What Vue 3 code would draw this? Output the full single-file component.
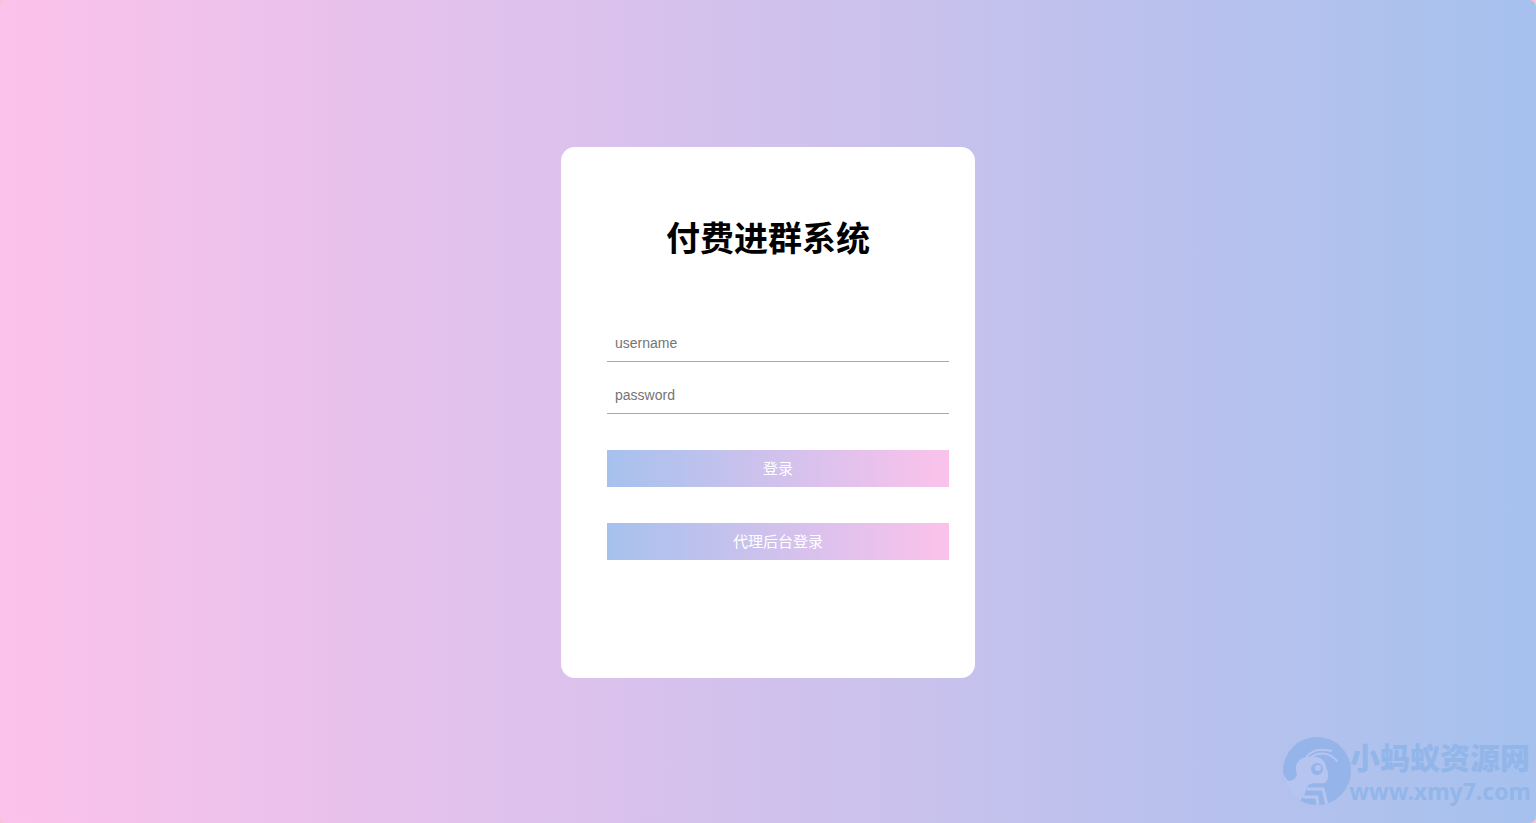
<script setup>
import { ref } from 'vue'

const username = ref('')
const password = ref('')
</script>

<template>
  <main class="page">
    <section class="card">
      <h1 class="title">付费进群系统</h1>
      <form class="form" @submit.prevent>
        <input v-model="username" class="field" type="text" name="username" placeholder="username" aria-label="username" />
        <input v-model="password" class="field" type="password" name="password" placeholder="password" aria-label="password" />
        <button class="btn" type="submit">登录</button>
        <button class="btn" type="button">代理后台登录</button>
      </form>
    </section>

    <aside class="brand">
      <svg class="logo" viewBox="0 0 68 68" aria-hidden="true">
        <defs>
          <clipPath id="disc"><circle cx="34" cy="34" r="34" /></clipPath>
        </defs>
        <circle cx="34" cy="34" r="34" fill="#95b4e9" />
        <g clip-path="url(#disc)">
          <path
            d="M13 33 C12 25 18 19 27 20 C36 18 43 24 43 31 C46 35 46 41 43 45 C39 48 31 45 27 47 C22 50 24 56 19 61 L14 68 L-2 60 L-2 36 L0 37 L5 44 C9 44 13 41 14 38 Z"
            fill="#b5c5f0"
          />
          <g fill="none" stroke="#b5c5f0" stroke-linecap="round">
            <path d="M23 21 C28 13 36 11 48 14" stroke-width="2" />
            <path d="M28 20 C37 14 47 16 54 24" stroke-width="2" />
          </g>
          <g fill="none" stroke="#b5c5f0">
            <path d="M24 52 H40 L44 68" stroke-width="3" />
            <path d="M20 60 H34 L35 70" stroke-width="3" />
          </g>
          <circle cx="34" cy="32" r="6" fill="#95b4e9" />
          <circle cx="35" cy="31" r="3" fill="#b5c5f0" />
        </g>
      </svg>
      <div class="brand-text">
        <span class="brand-name">小蚂蚁资源网</span>
        <span class="brand-url">www.xmy7.com</span>
      </div>
    </aside>
  </main>
</template>

<style>
body {
  margin: 0;
  background: #f6c3d6;
}
</style>

<style scoped>
.page {
  position: relative;
  box-sizing: border-box;
  display: flex;
  align-items: center;
  justify-content: center;
  min-height: 100vh;
  padding-top: 2px;
  border-radius: 7px;
  background: linear-gradient(to right, #fbc2eb, #a6c1ee);
  font-family: "Liberation Sans", "Noto Sans CJK SC", sans-serif;
}

.card {
  box-sizing: border-box;
  width: 414px;
  max-width: 100%;
  padding: 67px 0 118px;
  border-radius: 14px;
  background: #fff;
}

.title {
  margin: 0 0 61px;
  font-size: 34px;
  line-height: 50px;
  font-weight: 700;
  text-align: center;
  color: #000;
}

.form {
  display: flex;
  flex-direction: column;
  padding: 0 26px 0 46px;
}

.field {
  box-sizing: border-box;
  width: 100%;
  height: 37px;
  margin: 0 0 15px;
  padding: 0 8px;
  border: 0;
  border-bottom: 1px solid #a9a9a9;
  border-radius: 0;
  outline: 0;
  background: transparent;
  font-family: inherit;
  font-size: 14px;
  color: #333;
}

.field::placeholder {
  color: #757575;
  opacity: 1;
}

.btn {
  height: 37px;
  margin: 21px 0 15px;
  padding: 0;
  border: 0;
  background: linear-gradient(to right, #a6c1ee, #fbc2eb);
  font-family: inherit;
  font-size: 15px;
  line-height: 37px;
  color: #fff;
  cursor: pointer;
}

.btn:last-child {
  margin-bottom: 0;
}

.brand {
  position: absolute;
  right: 5px;
  bottom: 15px;
  display: flex;
  align-items: center;
  color: #93b6ea;
}

.logo {
  display: block;
  width: 68px;
  height: 68px;
  margin-right: -2px;
}

.brand-text {
  display: flex;
  flex-direction: column;
  align-items: flex-end;
  padding-top: 4px;
  white-space: nowrap;
}

.brand-name {
  margin-right: 1px;
  font-family: "Noto Sans CJK SC", sans-serif;
  font-size: 30px;
  font-weight: 900;
  line-height: 36px;
}

.brand-url {
  font-family: "Noto Sans", sans-serif;
  font-size: 23px;
  font-weight: 700;
  line-height: 34px;
}
</style>
